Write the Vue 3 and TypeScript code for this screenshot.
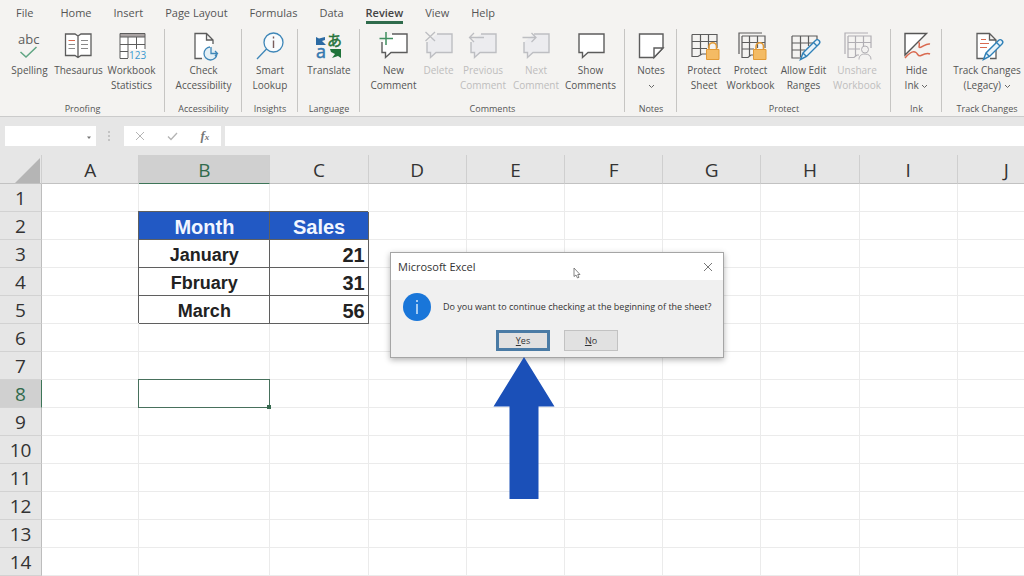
<script setup lang="ts">
import { ref } from 'vue'

interface Shape {
  d?: string
  text?: string
  x?: number
  y?: number
  size?: number
  stroke?: string
  fill?: string
  width?: number
}

interface Command {
  label: string[]
  size: number
  icon: Shape[]
  disabled?: boolean
  arrow?: 'below' | 'inline'
}

interface Group {
  name: string
  size: number
  commands: Command[]
}

const ink = '#5c5c5c'
const pale = '#bdbec2'
const blue = '#3f87b8'
const green = '#3f8f5f'
const red = '#d9694f'
const gold = '#e39a35'

const bubble = 'M4 4H29V22.5H13L7.5 27.5V22.5H4Z'
const cutBubble = 'M14 4H29V22.5H13L7.5 27.5V22.5H4V12'
const grid = 'M4 4.500H29V18M4 4.500V26.500H10L14 24H18M4 11.500H29M4 18.500H19M12.500 4.500V25M20.500 4.500V18'
const backGrid = 'M4 24V3H27M7 6H30V18M7 6V27.500H13L16 25H18M7 12.500H30M7 19H19M14.500 6V26M22.500 6V18'
const lockBody = 'M18.500 19.500H31V29.500H18.500Z'
const lockBow = 'M21 19V16.500A3.700 3.700 0 0 1 28.500 16.500V19'
const pencil = 'M12.500 29.500L15 23L27.500 10.500A2.300 2.300 0 0 1 31 14L18.500 26.500ZM15 23L18.500 26.500M25.500 12.500L29 16'

const tabs = ['File', 'Home', 'Insert', 'Page Layout', 'Formulas', 'Data', 'Review', 'View', 'Help']
const activeTab = ref('Review')

const groups: Group[] = [
  {
    name: 'Proofing',
    size: 165,
    commands: [
      {
        label: ['Spelling'],
        size: 48,
        icon: [
          { text: 'abc', x: 4, y: 14, size: 13, fill: ink },
          { d: 'M6.500 22L12 27L22.500 17', stroke: '#5fa583', width: 1.5 },
        ],
      },
      {
        label: ['Thesaurus'],
        size: 50,
        icon: [
          { d: 'M2.500 4H12L15 6L18 4H28V25.500H18L15 27.500L12 25.500H2.500ZM15 6V27', stroke: ink, fill: '#fff', width: 1.3 },
          { d: 'M5.500 10.500H12', stroke: red },
          { d: 'M5.500 14.500H12M5.500 18.500H12M18 10.500H25M18 14.500H25M18 18.500H25', stroke: '#8a8a8a' },
        ],
      },
      {
        label: ['Workbook', 'Statistics'],
        size: 56,
        icon: [
          { d: 'M4 3.500H29V20H13V28.500H4Z', fill: '#fff' },
          { d: 'M4 3.500H29V7H4Z', stroke: ink, fill: '#a9a3a3' },
          { d: 'M4 7V28.500H12M29 7V19M4 14.500H29M4 21.500H12M12 7V28M20.500 7V19', stroke: ink },
          { text: '123', x: 13, y: 29, size: 10, fill: '#3b9ad0' },
        ],
      },
    ],
  },
  {
    name: 'Accessibility',
    size: 77,
    commands: [
      {
        label: ['Check', 'Accessibility'],
        size: 66,
        icon: [
          { d: 'M14 28.500H7V3.500H18.500L25 10V14M18.500 3.500V10H25', stroke: ink, fill: '#fff', width: 1.3 },
          { d: 'M22 17A6.500 6.500 0 1 0 29 24M23 17V23.500H29.500M27 21L29.500 23.500L27 26', stroke: blue, fill: '#e4f0f6', width: 1.3 },
        ],
      },
    ],
  },
  {
    name: 'Insights',
    size: 56,
    commands: [
      {
        label: ['Smart', 'Lookup'],
        size: 46,
        icon: [
          { d: 'M29 12.500A9.500 9.500 0 1 1 10 12.500A9.500 9.500 0 1 1 29 12.500ZM12.500 19L3 29', stroke: blue, fill: '#f8fbfd', width: 1.3 },
          { d: 'M19.500 10.500V18M19.500 6.500V8.500', stroke: '#785c5c', width: 1.4 },
        ],
      },
    ],
  },
  {
    name: 'Language',
    size: 62,
    commands: [
      {
        label: ['Translate'],
        size: 52,
        icon: [
          { d: 'M3 7L6 8.500L12 7V10L9 11L13 15H3Z', fill: '#2b6aa3' },
          { text: 'a', x: 3, y: 28, size: 18, fill: '#3579b0', stroke: '#3579b0' },
          { text: 'あ', x: 14, y: 16, size: 15, fill: '#26733b', stroke: '#26733b' },
          { d: 'M17 19H28V28L25 26L19 28L22 24L18 22Z', fill: '#1f7339' },
        ],
      },
    ],
  },
  {
    name: 'Comments',
    size: 265,
    commands: [
      {
        label: ['New', 'Comment'],
        size: 54,
        icon: [
          { d: cutBubble, stroke: ink, fill: '#fff', width: 1.4 },
          { d: 'M8 2V15M1.500 8.500H15', stroke: green, width: 1.5 },
        ],
      },
      {
        label: ['Delete'],
        size: 36,
        disabled: true,
        icon: [
          { d: cutBubble, stroke: pale, fill: '#ececef', width: 1.4 },
          { d: 'M2.500 2L12 11M12 2L2.500 11', stroke: pale, width: 1.3 },
        ],
      },
      {
        label: ['Previous', 'Comment'],
        size: 53,
        disabled: true,
        icon: [
          { d: cutBubble, stroke: pale, fill: '#ececef', width: 1.4 },
          { d: 'M2.500 7.500H17M7 3L2.500 7.500L7 12', stroke: pale, width: 1.3 },
        ],
      },
      {
        label: ['Next', 'Comment'],
        size: 53,
        disabled: true,
        icon: [
          { d: cutBubble, stroke: pale, fill: '#ececef', width: 1.4 },
          { d: 'M2.500 7.500H16M11.500 3L16 7.500L11.500 12', stroke: pale, width: 1.3 },
        ],
      },
      {
        label: ['Show', 'Comments'],
        size: 56,
        icon: [{ d: bubble, stroke: ink, fill: '#fff', width: 1.4 }],
      },
    ],
  },
  {
    name: 'Notes',
    size: 52,
    commands: [
      {
        label: ['Notes'],
        size: 40,
        arrow: 'below',
        icon: [
          { d: 'M4.500 4H28V18L19 27.500H4.500Z', stroke: ink, fill: '#fff', width: 1.4 },
          { d: 'M28 18H19V27.500Z', stroke: ink, fill: '#fff', width: 1.4 },
        ],
      },
    ],
  },
  {
    name: 'Protect',
    size: 214,
    commands: [
      {
        label: ['Protect', 'Sheet'],
        size: 40,
        icon: [
          { d: grid, stroke: ink, width: 1.2 },
          { d: lockBow, stroke: gold, width: 1.6 },
          { d: lockBody, stroke: gold, fill: '#f4bb64' },
        ],
      },
      {
        label: ['Protect', 'Workbook'],
        size: 53,
        icon: [
          { d: backGrid, stroke: ink, width: 1.2 },
          { d: lockBow, stroke: gold, width: 1.6 },
          { d: lockBody, stroke: gold, fill: '#f4bb64' },
        ],
      },
      {
        label: ['Allow Edit', 'Ranges'],
        size: 53,
        icon: [
          { d: 'M4 6H29V12M4 6V28H13M4 13H25M4 20H17M12.500 6V27M20.500 6V16', stroke: ink, width: 1.2 },
          { d: pencil, stroke: '#2f80b7', fill: '#e9f3f9', width: 1.4 },
        ],
      },
      {
        label: ['Unshare', 'Workbook'],
        size: 54,
        disabled: true,
        icon: [
          { d: backGrid, stroke: '#b0aeb3', width: 1.2 },
          { d: 'M27.500 19.500A3.500 3.500 0 1 1 20.500 19.500A3.500 3.500 0 1 1 27.500 19.500ZM18 29.500C18 26 20 24 24 24S30 26 30 29.500', stroke: '#b0aeb3', fill: '#f3f2f1' },
        ],
      },
    ],
  },
  {
    name: 'Ink',
    size: 51,
    commands: [
      {
        label: ['Hide', 'Ink'],
        size: 40,
        arrow: 'inline',
        icon: [
          { d: 'M4 3.500H25.500L4 25Z', stroke: '#555', fill: '#fff', width: 1.4 },
          { d: 'M17.500 12C20 14 16.500 17.500 19 17.500S25 13 29 14M4 28C9 22 13 21 15 22.500S17 27 20 25.500S26 22.500 29 24', stroke: red, width: 1.5 },
        ],
      },
    ],
  },
  {
    name: 'Track Changes',
    size: 90,
    commands: [
      {
        label: ['Track Changes', '(Legacy)'],
        size: 76,
        arrow: 'inline',
        icon: [
          { d: 'M13 28.500H6V3.500H18.500L25 10V28.500H19M18.500 3.500V10H25', stroke: ink, fill: '#fff', width: 1.3 },
          { d: 'M10 9.500H15M9 13.500H18M9 17.500H16', stroke: red, width: 1.2 },
          { d: pencil, stroke: '#2f80b7', fill: '#e9f3f9', width: 1.4 },
        ],
      },
    ],
  },
]

const columns = ['A', 'B', 'C', 'D', 'E', 'F', 'G', 'H', 'I', 'J']
const cells: Record<string, string> = {
  B2: 'Month', C2: 'Sales',
  B3: 'January', C3: '21',
  B4: 'Fbruary', C4: '31',
  B5: 'March', C5: '56',
}
const selected = { column: 'B', row: 8 }

function cellClass(column: string, row: number) {
  const key = column + row
  return {
    filled: key in cells,
    heading: key in cells && row === 2,
    amount: column === 'C' && row > 2 && row < 6,
    selected: column === selected.column && row === selected.row,
  }
}

const reference = ref('')
const formula = ref('')
const dialogOpen = ref(true)
</script>

<template>
  <div class="excel">
    <header class="ribbon">
      <nav class="tabs" aria-label="Ribbon tabs">
        <button
          v-for="tab in tabs"
          :key="tab"
          type="button"
          class="tab"
          :class="{ active: tab === activeTab }"
          @click="activeTab = tab"
        >{{ tab }}</button>
      </nav>
      <div class="groups">
        <section v-for="group in groups" :key="group.name" class="group" :style="{ flexBasis: group.size + 'px' }">
          <div class="commands">
            <button
              v-for="command in group.commands"
              :key="command.label.join(' ')"
              type="button"
              class="command"
              :disabled="command.disabled"
              :style="{ width: command.size + 'px' }"
            >
              <svg class="icon" viewBox="0 0 32 32" aria-hidden="true">
                <template v-for="(shape, i) in command.icon" :key="i">
                  <text
                    v-if="shape.text"
                    :x="shape.x"
                    :y="shape.y"
                    :font-size="shape.size"
                    :fill="shape.fill"
                    :stroke="shape.stroke ?? 'none'"
                    stroke-width="0.5"
                  >{{ shape.text }}</text>
                  <path
                    v-else
                    :d="shape.d"
                    :fill="shape.fill ?? 'none'"
                    :stroke="shape.stroke ?? 'none'"
                    :stroke-width="shape.width ?? 1"
                  />
                </template>
              </svg>
              <span v-for="(line, i) in command.label" :key="line" class="line">
                {{ line }}
                <svg v-if="command.arrow === 'inline' && i === 1" class="chevron" viewBox="0 0 7 5" aria-hidden="true">
                  <path d="M1 1L3.500 3.500L6 1" />
                </svg>
              </span>
              <span v-if="command.arrow === 'below'" class="line">
                <svg class="chevron" viewBox="0 0 7 5" aria-hidden="true"><path d="M1 1L3.500 3.500L6 1" /></svg>
              </span>
            </button>
          </div>
          <h2 class="group-name">{{ group.name }}</h2>
        </section>
      </div>
    </header>

    <div class="formula-bar">
      <div class="name-box">
        <input v-model="reference" type="text" aria-label="Name box" />
        <button type="button" aria-label="Open name list">
          <svg viewBox="0 0 6 4" width="6" height="4"><path d="M1 0.500H5L3 3Z" fill="#777" /></svg>
        </button>
      </div>
      <svg class="grip" viewBox="0 0 4 12" aria-hidden="true">
        <path d="M1 1H3V3H1ZM1 5H3V7H1ZM1 9H3V11H1Z" fill="#c4c4c4" />
      </svg>
      <div class="entry-buttons">
        <button type="button" aria-label="Cancel">
          <svg viewBox="0 0 12 12"><path d="M2 2L10 10M10 2L2 10" stroke="#b4b4b4" fill="none" /></svg>
        </button>
        <button type="button" aria-label="Enter">
          <svg viewBox="0 0 12 12"><path d="M2 6.500L5 9.500L11 3" stroke="#b4b4b4" stroke-width="1.3" fill="none" /></svg>
        </button>
        <button type="button" class="fx" aria-label="Insert function">f<small>x</small></button>
      </div>
      <input v-model="formula" class="formula" type="text" aria-label="Formula" />
    </div>

    <main class="sheet">
      <table>
        <colgroup>
          <col class="col-head" />
          <col v-for="column in columns" :key="column" :class="'col-' + column.toLowerCase()" />
        </colgroup>
        <thead>
          <tr>
            <td class="corner">
              <svg viewBox="0 0 25 25" aria-hidden="true"><path d="M25 0V25H0Z" fill="#b5b5b5" /></svg>
            </td>
            <th v-for="column in columns" :key="column" scope="col" :class="{ current: column === selected.column }">{{ column }}</th>
          </tr>
        </thead>
        <tbody>
          <tr v-for="row in 14" :key="row">
            <th scope="row" :class="{ current: row === selected.row }">{{ row }}</th>
            <td v-for="column in columns" :key="column" :class="cellClass(column, row)">{{ cells[column + row] }}</td>
          </tr>
        </tbody>
      </table>
    </main>

    <div v-if="dialogOpen" class="dialog" role="dialog" aria-labelledby="dialog-title" aria-describedby="dialog-message">
      <div class="title-bar">
        <h1 id="dialog-title">Microsoft Excel</h1>
        <button type="button" class="close" aria-label="Close" @click="dialogOpen = false">
          <svg viewBox="0 0 10 10"><path d="M1 1L9 9M9 1L1 9" stroke="#777" fill="none" /></svg>
        </button>
      </div>
      <div class="message">
        <svg class="info" viewBox="0 0 28 28" aria-hidden="true">
          <circle cx="14" cy="14" r="14" fill="#1976d9" />
          <path d="M14 11V21M14 7V9" stroke="#cfe6fb" stroke-width="1.500" />
        </svg>
        <p id="dialog-message">Do you want to continue checking at the beginning of the sheet?</p>
      </div>
      <div class="actions">
        <button type="button" class="choice default" @click="dialogOpen = false"><u>Y</u>es</button>
        <button type="button" class="choice" @click="dialogOpen = false"><u>N</u>o</button>
      </div>
    </div>

    <svg class="pointer" viewBox="0 0 8 12" aria-hidden="true">
      <path d="M1 1V9.500L3 8L4.500 11L6 10.300L4.700 7.500H7Z" fill="#fff" stroke="#666" stroke-width="0.800" />
    </svg>
    <svg class="callout" viewBox="0 0 62 142" aria-hidden="true">
      <path d="M31 0L61.500 49.500H45.500V142H16.500V49.500H0.500Z" fill="#1b50b8" />
    </svg>
  </div>
</template>

<style>
body {
  margin: 0;
  overflow: hidden;
}
</style>

<style scoped>
.excel {
  position: relative;
  min-height: 100vh;
  overflow: hidden;
  background: #e6e6e6;
  color: #555;
  font-family: "Open Sans", "Noto Sans", "Noto Sans CJK JP", sans-serif;
  font-size: 10px;
}

button,
input {
  margin: 0;
  padding: 0;
  border: 0;
  background: none;
  color: inherit;
  font: inherit;
}

h1,
h2,
p {
  margin: 0;
  font-weight: 400;
}

.ribbon {
  height: 117px;
  background: #f4f3f1;
  border-bottom: 1px solid #cbcbcb;
  box-sizing: border-box;
}

.tabs {
  display: flex;
  gap: 22px;
  height: 24px;
  margin-bottom: 5px;
  padding-left: 16px;
  font-size: 11px;
}

.tab {
  padding-top: 4px;
  border-bottom: 3px solid transparent;
  line-height: 17px;
  white-space: nowrap;
}

.tab:first-child {
  margin-right: 5px;
}

.tab.active {
  border-color: #2f6b4c;
  color: #444;
  font-weight: 600;
}

.groups {
  display: flex;
}

.group {
  display: flex;
  flex: none;
  flex-direction: column;
  height: 86px;
  box-sizing: border-box;
  background: linear-gradient(#c6c5c3, #c6c5c3) right top / 1px 83px no-repeat;
}

.group:last-child {
  background: none;
}

.commands {
  display: flex;
  flex: 1;
  justify-content: center;
  align-items: flex-start;
}

.command {
  display: flex;
  flex-direction: column;
  align-items: center;
  padding-top: 1px;
  line-height: 15px;
}

.command:disabled {
  color: #bebdbd;
}

.icon {
  width: 32px;
  height: 32px;
  margin-bottom: 1px;
  flex: none;
  overflow: visible;
}

.line {
  height: 15px;
  white-space: nowrap;
}

.chevron {
  width: 7px;
  height: 5px;
  vertical-align: middle;
  fill: none;
  stroke: #666;
}

.group-name {
  font-size: 9px;
  line-height: 12px;
  text-align: center;
}

.formula-bar {
  display: flex;
  align-items: center;
  height: 38px;
  padding-left: 5px;
}

.name-box {
  display: flex;
  width: 91px;
  height: 20px;
  background: #fff;
}

.name-box input {
  flex: 1;
  min-width: 0;
}

.name-box button {
  width: 14px;
}

.grip {
  width: 4px;
  height: 12px;
  margin: 0 13px 0 11px;
}

.entry-buttons {
  display: flex;
  justify-content: space-around;
  align-items: center;
  width: 97px;
  height: 20px;
  margin-right: 4px;
  background: #fff;
}

.entry-buttons button {
  display: flex;
  justify-content: center;
  align-items: center;
  width: 30px;
  height: 20px;
}

.entry-buttons svg {
  width: 12px;
  height: 12px;
}

.entry-buttons .fx {
  align-items: baseline;
  color: #777;
  font: italic bold 13px/20px "Liberation Serif", serif;
}

.fx small {
  font-size: 9px;
}

.formula {
  flex: 1;
  height: 20px;
  background: #fff;
}

.sheet table {
  width: calc(100% + 32px);
  table-layout: fixed;
  border-collapse: separate;
  border-spacing: 0;
  background: #fff;
}

col {
  width: 98px;
}

.col-head {
  width: 42px;
}

.col-a {
  width: 97px;
}

.col-b {
  width: 131px;
}

th,
td {
  height: 28px;
  padding: 1px 0 0;
  box-sizing: border-box;
  border-right: 1px solid #ebebeb;
  border-bottom: 1px solid #ebebeb;
  line-height: 26px;
}

th {
  background: #e6e6e6;
  color: #333;
  font-size: 19px;
  font-weight: 400;
}

thead th,
.corner {
  height: 29px;
  padding-top: 2px;
  border-right-color: #cfcfcf;
  border-bottom-color: #c2c2c2;
  background: #e6e6e6;
}

thead th.current {
  border-bottom-color: #3d7558;
}

.corner svg {
  display: block;
  width: 25px;
  height: 25px;
  margin: 0 1px 0 auto;
}

tbody th {
  border-right-color: #bdbdbd;
  border-bottom-color: #d2d2d2;
}

tbody th.current {
  border-right-color: #3d7558;
}

th.current {
  background: #d0d0d0;
  color: #326b4d;
}

.filled {
  position: relative;
  padding-top: 3px;
  border-color: #5f5f5f;
  box-shadow: -1px -1px 0 #5f5f5f;
  color: #222;
  font-family: "Liberation Sans", sans-serif;
  font-size: 18px;
  font-weight: 700;
  line-height: 24px;
  text-align: center;
}

.heading {
  background: #2259c4;
  color: #f2f6ff;
  font-size: 20px;
}

.amount {
  padding-right: 3px;
  font-size: 20px;
  text-align: right;
}

.selected {
  position: relative;
}

.selected::before {
  content: "";
  position: absolute;
  inset: -1px;
  border: 1px solid #47705c;
}

.selected::after {
  content: "";
  position: absolute;
  right: -2px;
  bottom: -2px;
  width: 4px;
  height: 4px;
  background: #37694f;
}

.dialog {
  position: absolute;
  top: 252px;
  left: 390px;
  width: 334px;
  box-sizing: border-box;
  border: 1px solid #a5a5a5;
  background: #f0f0f0;
  box-shadow: 0 2px 6px rgba(0, 0, 0, 0.3);
  color: #333;
}

.title-bar {
  display: flex;
  justify-content: space-between;
  align-items: center;
  height: 27px;
  padding: 0 10px 0 7px;
  background: #fff;
}

.title-bar h1 {
  font-size: 11px;
}

.close svg {
  display: block;
  width: 10px;
  height: 10px;
}

.message {
  display: flex;
  align-items: center;
  gap: 12px;
  padding: 13px 0 0 12px;
}

.info {
  width: 28px;
  height: 28px;
}

.message p {
  font-size: 9px;
  font-weight: 500;
  line-height: 14px;
  white-space: nowrap;
}

.actions {
  display: flex;
  justify-content: center;
  gap: 14px;
  padding: 9px 0 6px;
}

.choice {
  width: 54px;
  height: 21px;
  box-sizing: border-box;
  border: 1px solid #c2c2c2;
  background: #e1e1e1;
  font-size: 9px;
}

.choice.default {
  border: 3px solid #4a7ba5;
}

.pointer {
  position: absolute;
  top: 267px;
  left: 573px;
  width: 8px;
  height: 12px;
}

.callout {
  position: absolute;
  top: 357px;
  left: 493px;
  width: 62px;
  height: 142px;
}
</style>
